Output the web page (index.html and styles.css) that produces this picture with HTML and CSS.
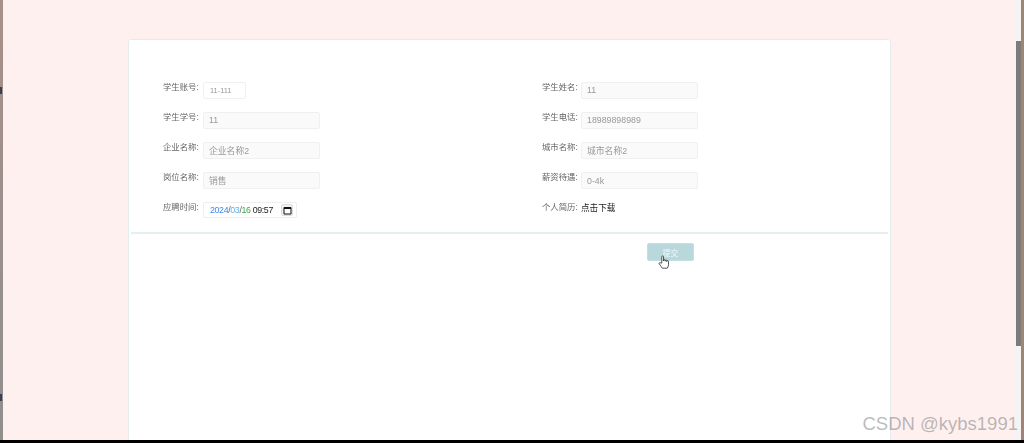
FILE: index.html
```html
<!DOCTYPE html>
<html lang="zh">
<head>
<meta charset="utf-8">
<title>应聘详情</title>
<link rel="stylesheet" href="styles.css">
</head>
<body>
<div class="window">
  <div class="viewport">
    <div class="edge"><i class="edge-mark edge-mark-top"></i><i class="edge-mark edge-mark-bottom"></i></div>
    <main class="page">
      <section class="card">
        <form class="form">
          <div class="row"><label class="label">学生账号:</label><input class="field field-short" value="11-111" readonly></div>
          <div class="row"><label class="label">学生姓名:</label><input class="field" value="11" readonly></div>
          <div class="row"><label class="label">学生学号:</label><input class="field" value="11" readonly></div>
          <div class="row"><label class="label">学生电话:</label><input class="field" value="18989898989" readonly></div>
          <div class="row"><label class="label">企业名称:</label><input class="field" value="企业名称2" readonly></div>
          <div class="row"><label class="label">城市名称:</label><input class="field" value="城市名称2" readonly></div>
          <div class="row"><label class="label">岗位名称:</label><input class="field" value="销售" readonly></div>
          <div class="row"><label class="label">薪资待遇:</label><input class="field" value="0-4k" readonly></div>
          <div class="row"><label class="label">应聘时间:</label>
            <div class="date">
              <span class="date-text"><span class="d-year">2024</span><span class="d-sep">/</span><span class="d-month">03</span><span class="d-sep">/</span><span class="d-day">16</span> 09:57</span>
              <span class="cal">
                <svg width="9" height="9" viewBox="0 0 9 9"><path d="M1 1.5h7v6.5H1z" fill="#fff" stroke="#111" stroke-width="1"/><path d="M1 1h7v2H1z" fill="#111"/></svg>
              </span>
            </div>
          </div>
          <div class="row"><label class="label">个人简历:</label><a class="link">点击下载</a></div>
        </form>
        <div class="divider"></div>
        <div class="actions">
          <button class="submit" type="button">提交</button>
          <svg class="cursor" width="13" height="15" viewBox="0 0 12 15" preserveAspectRatio="none">
            <path d="M3.5 8V1.6c0-1 1.6-1 1.6 0V6l.1-.8c0-.8 1.4-.8 1.4 0v1l.1-.7c0-.8 1.4-.7 1.4.1v1l.1-.5c.1-.8 1.5-.7 1.5.2v3.5c0 1.4-.7 2.4-1.1 3.4H3.9c-.5-1.4-1.6-2.4-2.7-4.2-.7-1.1.6-1.9 1.3-1z" fill="#fff" stroke="#333" stroke-width=".8" stroke-linejoin="round"/>
          </svg>
        </div>
      </section>
    </main>
    <div class="scrollbar"><div class="thumb"></div></div>
    <div class="edge-right"></div>
  </div>
  <div class="taskbar"></div>
  <div class="watermark">CSDN @kybs1991</div>
</div>
</body>
</html>
```

FILE: styles.css
```css
* { box-sizing: border-box; }
html, body { margin: 0; height: 100%; overflow: hidden; }
body { font-family: "Liberation Sans", "Noto Sans CJK SC", sans-serif; color: #666; }

.window { width: 1024px; height: 443px; display: flex; flex-direction: column; position: relative; }
.viewport { flex: 1; min-height: 0; display: flex; }
.taskbar { height: 3px; background: #000; }

.edge { width: 3px; position: relative; background: linear-gradient(#a89088, #8f8f8f); }
.edge-mark { position: absolute; left: 0; width: 2px; height: 7px; background: #3a3f55; }
.edge-mark-top { top: 87px; }
.edge-mark-bottom { top: 394px; }

.page { flex: 1; min-width: 0; background: #fff0f0; padding: 39px 125px 0 125px; position: relative; overflow: hidden; }

.card { width: 763px; height: 500px; background: #fff; border: 1px solid #e3edee; border-radius: 3px; padding: 0 2px; filter: blur(.35px); }

.form { display: grid; grid-template-columns: 379px 1fr; grid-auto-rows: 30.2px; padding: 41.6px 0 0 32px; height: 192px; }
.row { display: flex; gap: 5px; align-items: flex-start; }
.row:nth-child(odd) { gap: 6px; }
.label { width: 34px; font-size: 8.4px; line-height: 10px; white-space: nowrap; color: #666; }

.field { width: 117px; height: 17px; margin: 0; padding: 0 5px; background: #fafafa; border: 1px solid #f0f0f0; border-radius: 2px; font: 8.8px "Liberation Sans", "Noto Sans CJK SC", sans-serif; color: #999; outline: none; }
.field-short { width: 43px; background: #fff; font-size: 7.4px; padding-left: 6px; }

.date { width: 94px; height: 16px; display: flex; align-items: center; justify-content: space-between; padding: 0 3px 0 6px; background: #fff; border: 1px solid #eee; border-radius: 2px; font-size: 8.8px; color: #222; }
.date-text { letter-spacing: -.35px; }
.d-year { color: #3d8be8; }
.d-month { color: #5db4e8; }
.d-day { color: #3fa14a; }
.d-sep { color: #666; }
.cal { width: 12px; height: 12px; display: flex; align-items: center; justify-content: center; background: #f0f0f0; border: 1px solid #ddd; border-radius: 2px; }

.link { font-size: 8.6px; line-height: 12px; color: #222; }

.divider { height: 2px; background: #e4f0f0; }

.actions { position: relative; display: flex; padding: 9px 0 0 516px; }
.submit { width: 47px; height: 18px; padding: 0; background: #b8d8dc; border: 1px solid #c2dfe2; border-radius: 2px; color: #f4f8f8; font: 8px "Liberation Sans", "Noto Sans CJK SC", sans-serif; }
.cursor { position: absolute; left: 527px; top: 21px; }

.watermark { position: absolute; right: 6px; bottom: 8px; font-size: 18.5px; line-height: 22px; color: rgba(120,120,120,.5); white-space: nowrap; }

.scrollbar { width: 5px; background: #f4f4f4; padding-top: 41px; }
.thumb { height: 305px; background: #7c7c7c; }
.edge-right { width: 3px; background: #a08478; }
```
